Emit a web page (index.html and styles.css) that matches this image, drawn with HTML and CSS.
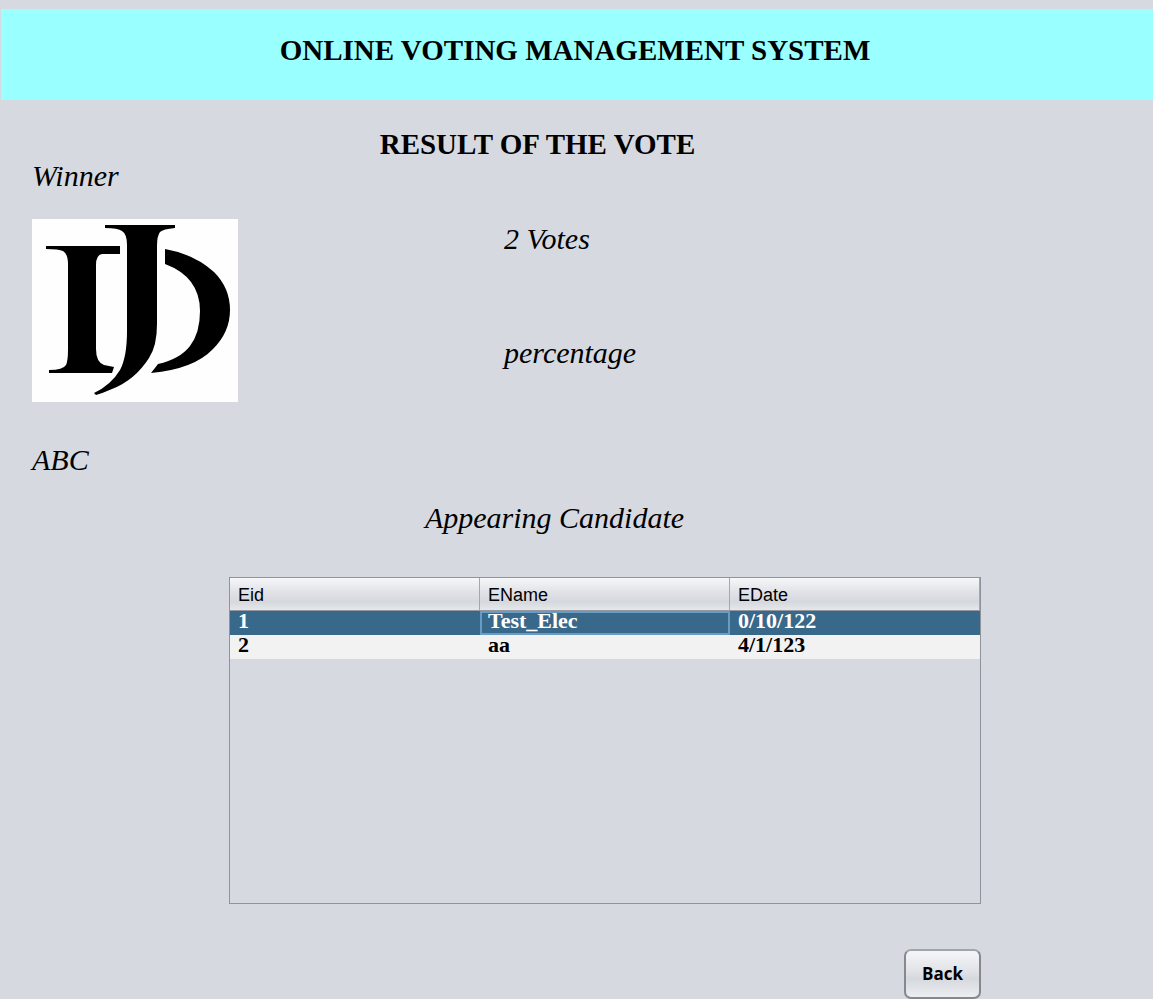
FILE: index.html
```html
<!DOCTYPE html>
<html lang="en">
<head>
<meta charset="utf-8">
<title>Online Voting Management System</title>
<link rel="stylesheet" href="styles.css">
</head>
<body>
<header class="banner"><h1 class="heading">ONLINE VOTING MANAGEMENT SYSTEM</h1></header>
<main class="content">
  <h2 class="heading result-title">RESULT OF THE VOTE</h2>
  <section class="result">
    <div class="winner">
      <p class="label">Winner</p>
      <svg class="symbol" viewBox="0 0 206 183" role="img" aria-label="Party symbol">
        <rect width="206" height="183" fill="#fefefe"/>
        <path d="M14 27H88V35H70Q64 36 64 46V130Q64 143 72 146L82 148L80 154H17V151Q31 151 34 146Q36 142 36 130V45Q36 35 31 32Q27 30 14 30Z"/>
        <path d="M73 6H143V9Q131 10 128 13Q125 17 125 27V105Q125 127 117 139Q103 161 80 170Q71 174 64 176L62 174Q79 166 88 151Q95 138 95 112V26Q95 15 90 12Q86 9 73 9Z"/>
        <path d="M133 30Q162 35 182 53Q198 69 198 91Q198 113 181 130Q162 150 119 154L126 145Q148 140 158 127Q168 114 168 92Q168 58 133 45Z"/>
      </svg>
      <p class="label">ABC</p>
    </div>
    <div class="tally">
      <p class="label">2 Votes</p>
      <p class="label">percentage</p>
    </div>
  </section>
  <h3 class="label candidates-title">Appearing Candidate</h3>
  <section class="candidates">
    <div class="table-pane">
      <table class="elections">
        <thead><tr><th scope="col">Eid</th><th scope="col">EName</th><th scope="col">EDate</th></tr></thead>
        <tbody>
          <tr class="selected"><td>1</td><td class="focused">Test_Elec</td><td>0/10/122</td></tr>
          <tr><td>2</td><td>aa</td><td>4/1/123</td></tr>
        </tbody>
      </table>
    </div>
    <button class="back" type="button">Back</button>
  </section>
</main>
</body>
</html>
```
FILE: styles.css
```css
* { box-sizing: border-box; }
body {
  margin: 0;
  padding-top: 9px;
  background: #d6d9e0;
  color: #000;
  font-family: Georgia, "Liberation Serif", serif;
}
h1, h2, h3, p { margin: 0; }
.banner {
  margin-left: 1px;
  padding: 25px 4px 34px 0;
  background: #99ffff;
  text-align: center;
}
.heading { font-size: 29px; line-height: 32px; font-weight: bold; }
.label { font-size: 30px; line-height: 32px; font-weight: normal; font-style: italic; }
.content { padding: 28px 0 0; }
.result-title { padding-right: 78px; text-align: center; }
.result { display: grid; grid-template-columns: 472px 1fr; padding-left: 32px; }
.winner { display: flex; flex-direction: column; align-items: flex-start; }
.symbol { display: block; width: 206px; height: 183px; margin: 27px 0 42px; }
.tally { display: flex; flex-direction: column; gap: 82px; padding-top: 63px; }
.candidates-title { margin-top: 26px; padding-right: 44px; text-align: center; }
.candidates { display: flex; flex-direction: column; align-items: flex-end; margin: 43px 172px 0 229px; }
.table-pane { width: 100%; min-height: 327px; border: 1px solid #8f949c; }
.elections { width: 100%; table-layout: fixed; border-collapse: separate; border-spacing: 0; }
.elections th {
  height: 33px;
  padding: 2px 8px 0;
  border-right: 1px solid #a3a7ae;
  border-bottom: 1px solid #93979f;
  background: linear-gradient(#f6f7f9, #e0e2e6 45%, #d5d8dd 75%, #e6e8eb);
  font: 18px/20px "Liberation Sans", Arial, sans-serif;
  text-align: left;
}
.elections td {
  height: 24px;
  padding: 0 8px 4px;
  background: #f2f2f2;
  font-size: 22px;
  line-height: 20px;
  font-weight: bold;
}
.elections .selected td { background: #39698a; color: #fff; }
.elections .focused { box-shadow: inset 0 0 0 2px #699cc5; }
.back {
  width: 77px;
  height: 50px;
  margin-top: 45px;
  padding: 0;
  border: 2px solid #85888f;
  border-top-color: #a2a5ab;
  border-radius: 7px;
  background: linear-gradient(#f5f6f8, #e0e2e6 45%, #d5d8dd 60%, #eceef1);
  color: #000;
  font: bold 17px/24px "Open Sans", "Noto Sans", sans-serif;
}
```
